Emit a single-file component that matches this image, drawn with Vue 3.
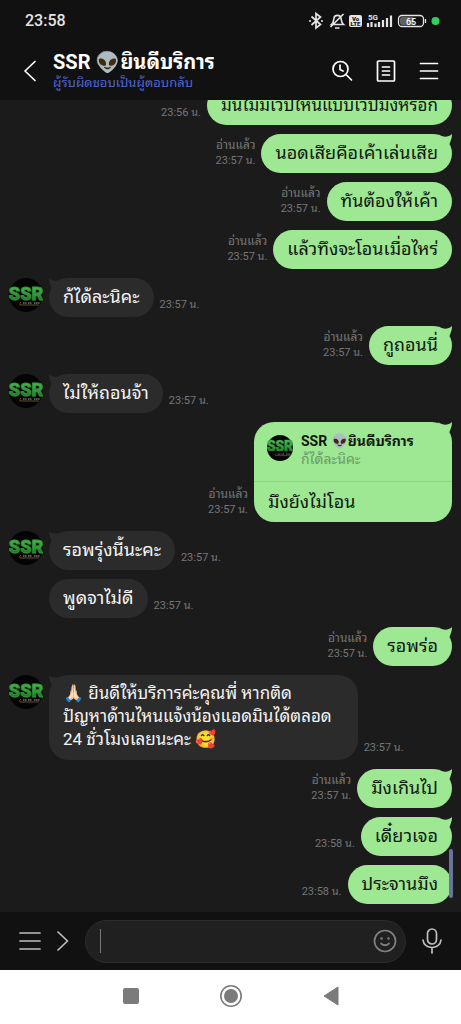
<script setup>
import { ref } from 'vue'

const draft = ref('')

const messages = [
  { id: 1, mine: true, compact: true, time: '23:56 น.', text: 'มันไม่มีเวปไหนแบบเวปมึงหรอก' },
  { id: 2, mine: true, tail: true, read: true, time: '23:57 น.', text: 'นอดเสียคือเค้าเล่นเสีย' },
  { id: 3, mine: true, read: true, time: '23:57 น.', text: 'ทันต้องให้เค้า' },
  { id: 4, mine: true, read: true, time: '23:57 น.', text: 'แล้วทึงจะโอนเมื่อไหร่' },
  { id: 5, avatar: true, tail: true, time: '23:57 น.', text: 'ก้ได้ละนิคะ' },
  { id: 6, mine: true, tail: true, read: true, time: '23:57 น.', text: 'กูถอนนี่' },
  { id: 7, avatar: true, tail: true, time: '23:57 น.', text: 'ไม่ให้ถอนจ้า' },
  { id: 8, mine: true, tail: true, read: true, time: '23:57 น.', text: 'มึงยังไม่โอน', quote: 'ก้ได้ละนิคะ' },
  { id: 9, avatar: true, tail: true, time: '23:57 น.', text: 'รอพรุ่งนี้นะคะ' },
  { id: 10, time: '23:57 น.', text: 'พูดจาไม่ดี' },
  { id: 11, mine: true, tail: true, read: true, time: '23:57 น.', text: 'รอพร่อ' },
  { id: 12, avatar: true, tail: true, compact: true, long: true, time: '23:57 น.', text: '🙏🏻 ยินดีให้บริการค่ะคุณพี่ หากติด\nปัญหาด้านไหนแจ้งน้องแอดมินได้ตลอด\n24 ชั่วโมงเลยนะคะ 🥰' },
  { id: 13, mine: true, tail: true, read: true, time: '23:57 น.', text: 'มึงเกินไป' },
  { id: 14, mine: true, tail: true, time: '23:58 น.', text: 'เดี๋ยวเจอ' },
  { id: 15, mine: true, time: '23:58 น.', text: 'ประจานมึง' },
]
</script>

<template>
  <div class="phone">
    <svg class="defs" width="0" height="0" aria-hidden="true">
      <defs>
        <linearGradient id="logo-green" x1="0" y1="0" x2="0" y2="1">
          <stop offset="0" stop-color="#5cc462" />
          <stop offset="0.5" stop-color="#389e3e" />
          <stop offset="1" stop-color="#1a5a20" />
        </linearGradient>
        <symbol id="logo" viewBox="0 0 34 34">
          <circle cx="17" cy="17" r="17" fill="#030403" />
          <text x="17" y="21.500" text-anchor="middle" font-family="Roboto, sans-serif" font-weight="900" font-size="18" fill="url(#logo-green)" stroke="#2f9a37" stroke-width="0.800">SSR</text>
          <path d="M12 24 q-2 1 -1 3 h19" fill="none" stroke="#8a7444" stroke-width="0.700" />
          <path d="M14 25 h4 M19 25 h4 M25 25 h6" stroke="#aaa" stroke-width="1" stroke-dasharray="1.500 .5" />
        </symbol>
      </defs>
    </svg>

    <div class="status">
      <span class="clock">23:58</span>
      <svg width="136" height="24" viewBox="306 9 136 24" fill="none" stroke="#e4e4e4" role="img" aria-label="65">
        <path d="M311.500 16.500 l9 8 -4.500 3.500 V13.500 l4.500 3.500 -9 8" stroke-width="1.700" />
        <circle cx="310" cy="21" r="0.700" /><circle cx="322" cy="21" r="0.700" />
        <path d="M331.500 24.500 c2.500-2 2-4.500 2.500-6.500 .7-3.500 6-3.500 7 0 .5 2 0 4.500 2.500 6.500z M330.500 27 l13-13 M335 28 h4.500" stroke-width="1.600" />
        <rect x="349" y="15" width="13" height="12" rx="2" fill="#e4e4e4" stroke="none" />
        <g fill="#111" stroke="none" font-family="Roboto, sans-serif" font-weight="900" font-size="6" text-anchor="middle">
          <text x="355.500" y="20.500">Vo</text><text x="355.500" y="26">LTE</text>
        </g>
        <text x="368" y="20" font-family="Roboto, sans-serif" font-weight="700" font-size="8" fill="#e4e4e4" stroke="none">5G</text>
        <path d="M368 23v4M371.500 22v5M375.500 23.500v3.500M379 22v5M383 20v7M387 18v9M391 15.500v11.500" stroke-width="2.200" />
        <rect x="398.500" y="15.500" width="25" height="11" rx="3.500" stroke-width="1.300" />
        <rect x="400" y="17" width="14" height="8" rx="2" fill="#606060" stroke="none" />
        <path d="M425.500 19v4" stroke-width="1.300" />
        <text x="411" y="24.500" text-anchor="middle" font-family="Roboto, sans-serif" font-weight="500" font-size="9" fill="#fff" stroke="none">65</text>
        <circle cx="435.500" cy="21" r="4" fill="#2fd05f" stroke="none" />
      </svg>
    </div>

    <header class="header">
      <button class="icon back" aria-label="กลับ">
        <svg width="14" height="22" viewBox="0 0 14 22"><path d="M12 1.500 L2 11 L12 20.500" /></svg>
      </button>
      <div class="heading">
        <h1>SSR 👽ยินดีบริการ</h1>
        <p>ผู้รับผิดชอบเป็นผู้ตอบกลับ</p>
      </div>
      <div class="actions">
        <button class="icon" aria-label="ค้นหา">
          <svg width="22" height="22" viewBox="0 0 22 22"><circle cx="9.500" cy="9" r="7.500" /><path d="M15 14.500 L20.500 20 M9 5 V9.500 L12 11" /></svg>
        </button>
        <button class="icon" aria-label="โน้ต">
          <svg width="20" height="22" viewBox="0 0 20 22"><rect x="1.500" y="1" width="17" height="20" rx="1" /><path d="M6.500 7h7M6.500 11h7M6.500 15h7" /></svg>
        </button>
        <button class="icon" aria-label="เมนู">
          <svg width="20" height="22" viewBox="0 0 20 22"><path d="M1.500 3.500h17M1.500 11h17M1.500 18.500h17" /></svg>
        </button>
      </div>
    </header>

    <main class="chat">
      <div v-for="m in messages" :key="m.id" class="row" :class="{ mine: m.mine }">
        <div v-if="!m.mine" class="avatar">
          <svg v-if="m.avatar" width="34" height="34" role="img" aria-label="SSR"><use href="#logo" /></svg>
        </div>
        <div class="bubble" :class="{ quoted: m.quote, compact: m.compact, long: m.long }">
          <div v-if="m.quote" class="quote">
            <svg width="26" height="26" aria-hidden="true"><use href="#logo" /></svg>
            <div>
              <strong>SSR 👽ยินดีบริการ</strong>
              <span>{{ m.quote }}</span>
            </div>
          </div>
          <p>{{ m.text }}</p>
          <svg v-if="m.tail" class="tail" width="14" height="12" viewBox="0 0 14 12" aria-hidden="true">
            <path d="M0 0 C5 3.500 10 3.500 14 0 C14 4 13 6 11.500 10 L4 8 Z" />
          </svg>
        </div>
        <div class="meta">
          <span v-if="m.read">อ่านแล้ว</span>
          <time>{{ m.time }}</time>
        </div>
      </div>
      <div class="scroll" aria-hidden="true"></div>
    </main>

    <footer class="composer">
      <button class="icon" aria-label="เมนู">
        <svg width="22" height="20" viewBox="0 0 22 20"><path d="M1 2h20M1 10h20M1 18h20" /></svg>
      </button>
      <button class="icon" aria-label="ขยาย">
        <svg width="12" height="20" viewBox="0 0 12 20"><path d="M1 1 L10.500 10 L1 19" /></svg>
      </button>
      <label class="field">
        <i class="caret"></i>
        <input v-model="draft" type="text" aria-label="ข้อความ" />
        <button class="icon smile" aria-label="สติกเกอร์">
          <svg width="24" height="24" viewBox="0 0 24 24"><circle cx="12" cy="12" r="10.500" /><path d="M8 14.500 q4 3.500 8 0" /><circle cx="8.500" cy="9.500" r="0.500" /><circle cx="15.500" cy="9.500" r="0.500" /></svg>
        </button>
      </label>
      <button class="icon" aria-label="ไมโครโฟน">
        <svg width="20" height="26" viewBox="0 0 20 26"><rect x="5.500" y="1" width="9" height="15" rx="4.500" /><path d="M1 12 c1 10 17 10 18 0 M10 20v5" /></svg>
      </button>
    </footer>

    <nav class="system">
      <button aria-label="แอปล่าสุด"><svg width="16" height="16"><rect width="16" height="16" rx="2" fill="#7b7b7b" /></svg></button>
      <button aria-label="หน้าหลัก"><svg width="24" height="24"><circle cx="12" cy="12" r="10.200" fill="none" stroke="#7b7b7b" stroke-width="1.600" /><circle cx="12" cy="12" r="7" fill="#7b7b7b" /></svg></button>
      <button aria-label="ย้อนกลับ"><svg width="16" height="20"><path d="M15 1 V19 L1 10z" fill="#7b7b7b" stroke="#7b7b7b" stroke-linejoin="round" /></svg></button>
    </nav>
  </div>
</template>

<style>
body {
  margin: 0;
  background: #111;
}
</style>

<style scoped>
.phone {
  height: 100vh;
  display: flex;
  flex-direction: column;
  overflow: hidden;
  background: #111;
  color: #fff;
  font-family: Roboto, "Noto Sans Thai Looped", "Noto Looped Thai", Loma, Waree, "Noto Sans Thai", "Noto Sans", sans-serif;
}
.defs {
  position: absolute;
}
h1, p {
  margin: 0;
}
button {
  display: flex;
  padding: 0;
  border: 0;
  background: none;
}
.icon svg {
  fill: none;
  stroke: currentColor;
  stroke-width: 1.7;
  stroke-linecap: round;
  stroke-linejoin: round;
}
.icon {
  color: #fff;
}
.status {
  flex: none;
  height: 42px;
  padding: 0 19px 0 25px;
  display: flex;
  align-items: center;
  justify-content: space-between;
}
.clock {
  font-size: 16px;
  line-height: 20px;
  font-weight: 500;
  color: #e4e4e4;
}
.header {
  flex: none;
  height: 58px;
  padding: 0 22px 0 23px;
  box-sizing: border-box;
  display: flex;
  align-items: center;
}
.heading {
  flex: 1;
  margin-left: 16px;
}
h1 {
  font-size: 20px;
  line-height: 24px;
  font-weight: 700;
  white-space: nowrap;
}
.heading p {
  font-size: 13px;
  line-height: 18px;
  color: #4f66d6;
}
.actions {
  display: flex;
  gap: 23px;
}
.chat {
  position: relative;
  flex: 1;
  min-height: 0;
  overflow: hidden;
  box-sizing: border-box;
  padding: 0 9px 8px;
  display: flex;
  flex-direction: column;
  justify-content: flex-end;
  gap: 9px;
  background: #1b1b1b;
}
.row {
  flex: none;
  display: flex;
  align-items: flex-end;
  gap: 6px;
}
.row.mine {
  flex-direction: row-reverse;
}
.avatar {
  align-self: flex-start;
  width: 34px;
}
.avatar svg {
  display: block;
}
.bubble {
  position: relative;
  box-sizing: border-box;
  min-height: 39px;
  padding: 7px 14px 8px;
  border-radius: 20px;
  background: #2b2b2b;
  color: #f4f4f4;
  font-size: 18px;
  line-height: 24px;
}
.bubble p {
  white-space: pre;
}
.mine .bubble {
  background: #9ee793;
  color: #101810;
}
.compact {
  font-size: 17px;
}
.long {
  padding-right: 26px;
  padding-bottom: 9px;
  line-height: 23px;
}
.tail {
  position: absolute;
  top: 0;
  left: 0;
  fill: #2b2b2b;
  transform: scaleX(-1);
}
.mine .tail {
  left: auto;
  right: 0;
  fill: #9ee793;
  transform: none;
}
.mine .quoted {
  width: 198px;
  padding: 0;
}
.quoted p {
  padding: 8px 14px;
}
.quote {
  display: flex;
  gap: 8px;
  height: 60px;
  padding: 10px 13px 0;
  box-sizing: border-box;
  border-bottom: 1px solid #91d488;
}
.quote svg {
  flex: none;
  margin-top: 3px;
}
.quote div {
  display: flex;
  flex-direction: column;
  white-space: nowrap;
}
.quote strong,
.quote span {
  font-size: 14px;
  line-height: 18px;
}
.quote span {
  color: #6b9a66;
}
.meta {
  display: flex;
  flex-direction: column;
  padding-bottom: 4px;
  font-size: 11px;
  line-height: 16px;
  color: #777;
  white-space: nowrap;
}
.meta span {
  font-size: 12px;
}
.mine .meta {
  text-align: right;
}
.scroll {
  position: absolute;
  right: 8px;
  bottom: 14px;
  width: 4px;
  height: 49px;
  border-radius: 2px;
  background: #68749a;
}
.composer {
  flex: none;
  height: 58px;
  padding: 0 19px;
  display: flex;
  align-items: center;
  gap: 16px;
}
.composer .icon {
  color: #c0c0c0;
}
.field {
  flex: 1;
  min-width: 0;
  height: 43px;
  box-sizing: border-box;
  padding: 0 8px 0 14px;
  display: flex;
  align-items: center;
  border: 1px solid #2c2c2c;
  border-radius: 22px;
  background: #202020;
}
.caret {
  width: 1px;
  height: 24px;
  background: #777;
}
.field input {
  flex: 1;
  min-width: 0;
  border: 0;
  outline: 0;
  background: none;
  color: #fff;
  font: inherit;
}
.composer .field .smile {
  color: #808080;
}
.system {
  flex: none;
  height: 54px;
  padding-bottom: 2px;
  box-sizing: border-box;
  display: flex;
  align-items: center;
  justify-content: center;
  gap: 80px;
  background: #fff;
}
</style>
